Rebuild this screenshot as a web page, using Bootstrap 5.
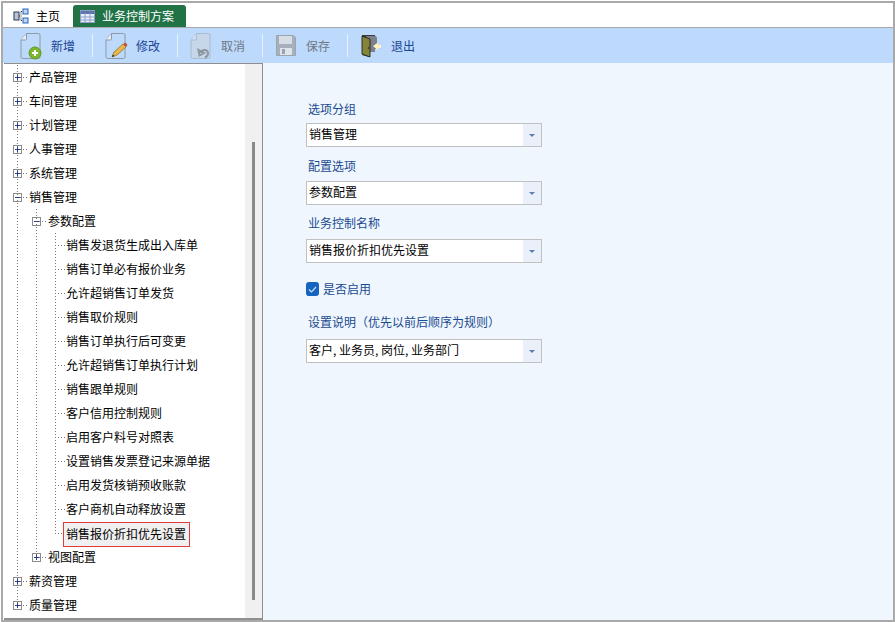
<!DOCTYPE html>
<html lang="zh-CN"><head><meta charset="utf-8"><title>业务控制方案</title>
<link href="https://cdn.jsdelivr.net/npm/bootstrap@5.3.0/dist/css/bootstrap.min.css" rel="stylesheet">
<style>
html,body{height:100%;overflow:hidden}
body{font:12px/16px "Noto Sans CJK SC","Liberation Sans",sans-serif;color:#000;background:#fff;padding:1px 0 0 1px}
.frame{height:621px;border:2px solid #a9a9a9}
.tabbar{height:25px;padding:2px 0 0 8px;border-bottom:1px solid #a9a9a9;flex:none}
.tabx{height:22px;padding:0 11px 0 2px;gap:7px}
.tabx.on{margin-left:2px;background:#217346;color:#fff;border-radius:3px 3px 0 0;padding:0 12px 0 7px}
.tool{height:35px;background:#bdd9fb;padding-left:14px;flex:none}
.toolitem{gap:8px;color:#1b4596;padding:0 17px 0 2px;border-right:1px solid #e8f2fe;height:23px;margin-right:9px}
.toolitem:last-child{border:0}
.toolitem.off{color:#6f7885}
.mainx{flex:1 1 0;min-height:0}
.treepane{width:259px;margin-left:1px;border-style:solid;border-color:#8f8f8f;border-width:1px 1px 2px 0;background:#fff;position:relative;flex:none}
.treelist{padding:1px 0 0 4px}
.rowx{height:24px}
.cellx{width:19px;height:24px;flex:none;position:relative;background-repeat:no-repeat}
.cellx.v{background-image:repeating-linear-gradient(#777 0 1px,transparent 1px 3px);background-size:1px 100%;background-position:9px 0}
.cellx.t{background-image:repeating-linear-gradient(#777 0 1px,transparent 1px 3px),repeating-linear-gradient(90deg,#777 0 1px,transparent 1px 3px);background-size:1px 100%,10px 1px;background-position:9px 0,9px 12px}
.cellx.f{background-image:repeating-linear-gradient(#777 0 1px,transparent 1px 3px),repeating-linear-gradient(90deg,#777 0 1px,transparent 1px 3px);background-size:1px 12px,10px 1px;background-position:9px 0,9px 12px}
.cellx svg{position:absolute;left:5px;top:8px}
.labelx{line-height:24px;padding-left:2px;white-space:nowrap}
.labelx.leaf{padding-left:1px}
.labelx.selx{margin:1px 0 0 -2px;height:25px;line-height:20px;padding:1px 3px 1px 2px;border:1px solid #e23a3a;background:#f0f0f0;background-clip:padding-box;position:relative;z-index:1;align-self:flex-start}
.gutter{position:absolute;right:0;top:0;bottom:0;width:17px;background:#f0f0f0}
.thumb{position:absolute;left:7px;top:78px;width:3px;height:458px;background:#8a8a8a}
.formpane{background:#eff6fe;padding:37px 0 0 43px}
.fieldx{width:236px;margin-bottom:10px}
.fieldx.tight{margin-bottom:9px}
.caption{color:#1a4a8f;line-height:18px;margin-bottom:5px;padding-left:2px}
.caption.m6{margin-bottom:6px}
.caption.m7{margin-bottom:7px}
.caption.wide{margin-bottom:8px}
.combo{height:24px;border:1px solid #c1c1c1;background:#fff;display:flex}
.combo .form-control{border:0;border-radius:0;padding:0 2px 4px;font-size:12px;line-height:16px;height:22px;background:#fff;color:#000;box-shadow:none}
.arrowx{width:18px;background:#e9f0fa;display:flex;align-items:center;justify-content:center;flex:none}
.checkx{height:16px;margin:18px 0 16px;gap:4px;color:#1a4a8f}
.boxchk{width:13px;height:14px;border-radius:3px;background:#1565c0;display:flex;align-items:center;justify-content:center}
</style></head>
<body>
<svg width="0" height="0" class="d-none" aria-hidden="true"><defs>
<linearGradient id="gb" x1="0" y1="0" x2="1" y2="1"><stop offset="0" stop-color="#fff"/><stop offset="1" stop-color="#cfcfcf"/></linearGradient>
<symbol id="plus" viewBox="0 0 9 9"><rect x=".5" y=".5" width="8" height="8" fill="url(#gb)" stroke="#8c8c8c"/><path d="M2 4.500h5M4.500 2v5" stroke="#2a3f8f"/></symbol>
<symbol id="minus" viewBox="0 0 9 9"><rect x=".5" y=".5" width="8" height="8" fill="url(#gb)" stroke="#8c8c8c"/><path d="M2 4.500h5" stroke="#2a3f8f"/></symbol>
<linearGradient id="pg" x1="0" y1="0" x2="1" y2="1"><stop offset="0" stop-color="#fff"/><stop offset="1" stop-color="#dfe6ee"/></linearGradient>
<symbol id="doc" viewBox="0 0 24 28"><path d="M7.500 1.500H19.500a1.500 1.500 0 0 1 1.500 1.500V25a1.500 1.500 0 0 1-1.500 1.500H3.500A1.500 1.500 0 0 1 2 25V8z" fill="url(#pg)" stroke="#8d99a8"/><path d="M7.500 1.500V7a1 1 0 0 1-1 1H2" fill="#e8edf3" stroke="#8d99a8"/></symbol>
</defs></svg>
<div class="frame d-flex flex-column">
 <div class="tabbar d-flex align-items-start">
  <div class="tabx d-flex align-items-center">
   <svg width="16" height="16" viewBox="0 0 16 16"><rect x="1" y="4" width="5" height="8" fill="#b9c6d8" stroke="#2f3a4c"/><rect x="10" y="1" width="5" height="5" fill="#bcd6f5" stroke="#2366b8"/><rect x="10" y="10" width="5" height="5" fill="#bcd6f5" stroke="#2366b8"/><path d="M6 8h2M8 3.500v9M8 3.500h2M8 12.500h2" stroke="#333" stroke-dasharray="1 1"/></svg>
   <span>主页</span>
  </div>
  <div class="tabx on d-flex align-items-center">
   <svg width="15" height="13" viewBox="0 0 15 13"><rect x=".5" y=".5" width="14" height="12" fill="#e9eefb" stroke="#8ea0c8"/><path d="M.5 2.500h14" stroke="#5d74ad" stroke-width="3"/><path d="M.5 7h14M.5 10h14M5 3v10M10 3v10" stroke="#8ea0c8"/></svg>
   <span>业务控制方案</span>
  </div>
 </div>
 <div class="tool d-flex align-items-center">
  <div class="toolitem d-flex align-items-center">
   <svg width="24" height="28" viewBox="0 0 24 28"><use href="#doc"/><circle cx="16" cy="21" r="6" fill="#7ab72c" stroke="#5d9a1c"/><path d="M13 21h6M16 18v6" stroke="#fff" stroke-width="2"/></svg>
   <span>新增</span></div>
  <div class="toolitem d-flex align-items-center">
   <svg width="24" height="28" viewBox="0 0 24 28"><use href="#doc"/><path d="M8 25l2-5 9-8 3 3-9 8z" fill="#eab64a" stroke="#8a6a20" stroke-width=".7"/><path d="M19 12l3 3 1.500-2-2-2.500z" fill="#c2503c"/><path d="M8 25l.8-2.500 1.800 1.500z" fill="#333"/></svg>
   <span>修改</span></div>
  <div class="toolitem off d-flex align-items-center">
   <svg width="24" height="28" viewBox="0 0 24 28"><g opacity=".55"><path d="M7.500 1.500H19.500q1.500 0 1.500 1.500V25q0 1.500-1.500 1.500H3.500Q2 26.500 2 25V8z" fill="#cfd6dd" stroke="#9aa3ad"/><path d="M7.500 1.500V8H2" fill="#e1e6eb" stroke="#9aa3ad"/></g><path d="M11 20.500c3-4 8-3 8 1 0 2-1 3-3 4M9.500 18l1 5.500 4.500-2.500z" fill="none" stroke="#8d979f" stroke-width="2"/></svg>
   <span>取消</span></div>
  <div class="toolitem off d-flex align-items-center">
   <svg width="24" height="24" viewBox="-2 -1 24 24"><path d="M.5.500h17l2 2v18H.5z" fill="#a5b0bc" stroke="#9aa5b0"/><rect x="3" y="1" width="13" height="8" fill="#d6dde4"/><rect x="4" y="13" width="12" height="7" fill="#dfe5ea"/><rect x="6" y="14" width="3" height="5" fill="#98a3ae"/></svg>
   <span>保存</span></div>
  <div class="toolitem d-flex align-items-center">
   <svg width="24" height="24" viewBox="-2 0 24 24"><path d="M1 1h13v4l-6 1v17L1 21z" fill="#3a3a3a"/><path d="M5 2h10l1 2v11h-2v3H8V6L5 4z" fill="#7d7f8a"/><path d="M1 2l8 3v18l-8-3z" fill="#85853a" stroke="#222" stroke-width=".9"/><circle cx="7.500" cy="14" r=".8" fill="#222"/><path d="M12 12l5-3.500V11h3v3h-3v2.500z" fill="#fff3c4"/></svg>
   <span>退出</span></div>
 </div>
 <div class="mainx d-flex">
  <div class="treepane">
   <div class="treelist" id="tree"></div>
   <div class="gutter"><div class="thumb"></div></div>
  </div>
  <div class="formpane flex-fill">
   <div class="fieldx"><div class="caption">选项分组</div><div class="combo"><input class="form-control" readonly value="销售管理"><span class="arrowx"><svg width="6" height="3" viewBox="0 0 6 3"><path d="M0 0h6L3 3z" fill="#5b7fb4"/></svg></span></div></div>
   <div class="fieldx tight"><div class="caption m6">配置选项</div><div class="combo"><input class="form-control" readonly value="参数配置"><span class="arrowx"><svg width="6" height="3" viewBox="0 0 6 3"><path d="M0 0h6L3 3z" fill="#5b7fb4"/></svg></span></div></div>
   <div class="fieldx"><div class="caption m7">业务控制名称</div><div class="combo"><input class="form-control" readonly value="销售报价折扣优先设置"><span class="arrowx"><svg width="6" height="3" viewBox="0 0 6 3"><path d="M0 0h6L3 3z" fill="#5b7fb4"/></svg></span></div></div>
   <div class="checkx d-flex align-items-center"><span class="boxchk"><svg width="9" height="7" viewBox="0 0 9 7"><path d="M1 3.500l2.500 2.500L8 1" fill="none" stroke="#cfe0f5" stroke-width="1.200"/></svg></span><span>是否启用</span></div>
   <div class="fieldx"><div class="caption wide">设置说明（优先以前后顺序为规则）</div><div class="combo"><input class="form-control" readonly value="客户, 业务员, 岗位, 业务部门"><span class="arrowx"><svg width="6" height="3" viewBox="0 0 6 3"><path d="M0 0h6L3 3z" fill="#5b7fb4"/></svg></span></div></div>
  </div>
 </div>
</div>
<script>
var top0=["产品管理","车间管理","计划管理","人事管理","系统管理"],
 leaves=["销售发退货生成出入库单","销售订单必有报价业务","允许超销售订单发货","销售取价规则","销售订单执行后可变更","允许超销售订单执行计划","销售跟单规则","客户信用控制规则","启用客户料号对照表","设置销售发票登记来源单据","启用发货核销预收账款","客户商机自动释放设置","销售报价折扣优先设置"];
function ic(n){return '<svg width="9" height="9"><use href="#'+n+'"/></svg>'}
function row(cells,text,cls){return '<div class="rowx d-flex">'+cells.join('')+'<span class="labelx '+(cls||'')+'">'+text+'</span></div>'}
function c(k,i){return '<span class="cellx '+k+'">'+(i?ic(i):'')+'</span>'}
var h='';
top0.forEach(function(t){h+=row([c('t','plus')],t)});
h+=row([c('t','minus')],"销售管理");
h+=row([c('v'),c('t','minus')],"参数配置");
leaves.forEach(function(t,i){var last=i==leaves.length-1;h+=row([c('v'),c('v'),c(last?'f':'t')],t,last?'leaf selx':'leaf')});
h+=row([c('v'),c('f','plus')],"视图配置");
h+=row([c('t','plus')],"薪资管理");
h+=row([c('f','plus')],"质量管理");
document.getElementById('tree').innerHTML=h;
</script>
<script src="https://cdn.jsdelivr.net/npm/bootstrap@5.3.0/dist/js/bootstrap.bundle.min.js"></script>
</body></html>
